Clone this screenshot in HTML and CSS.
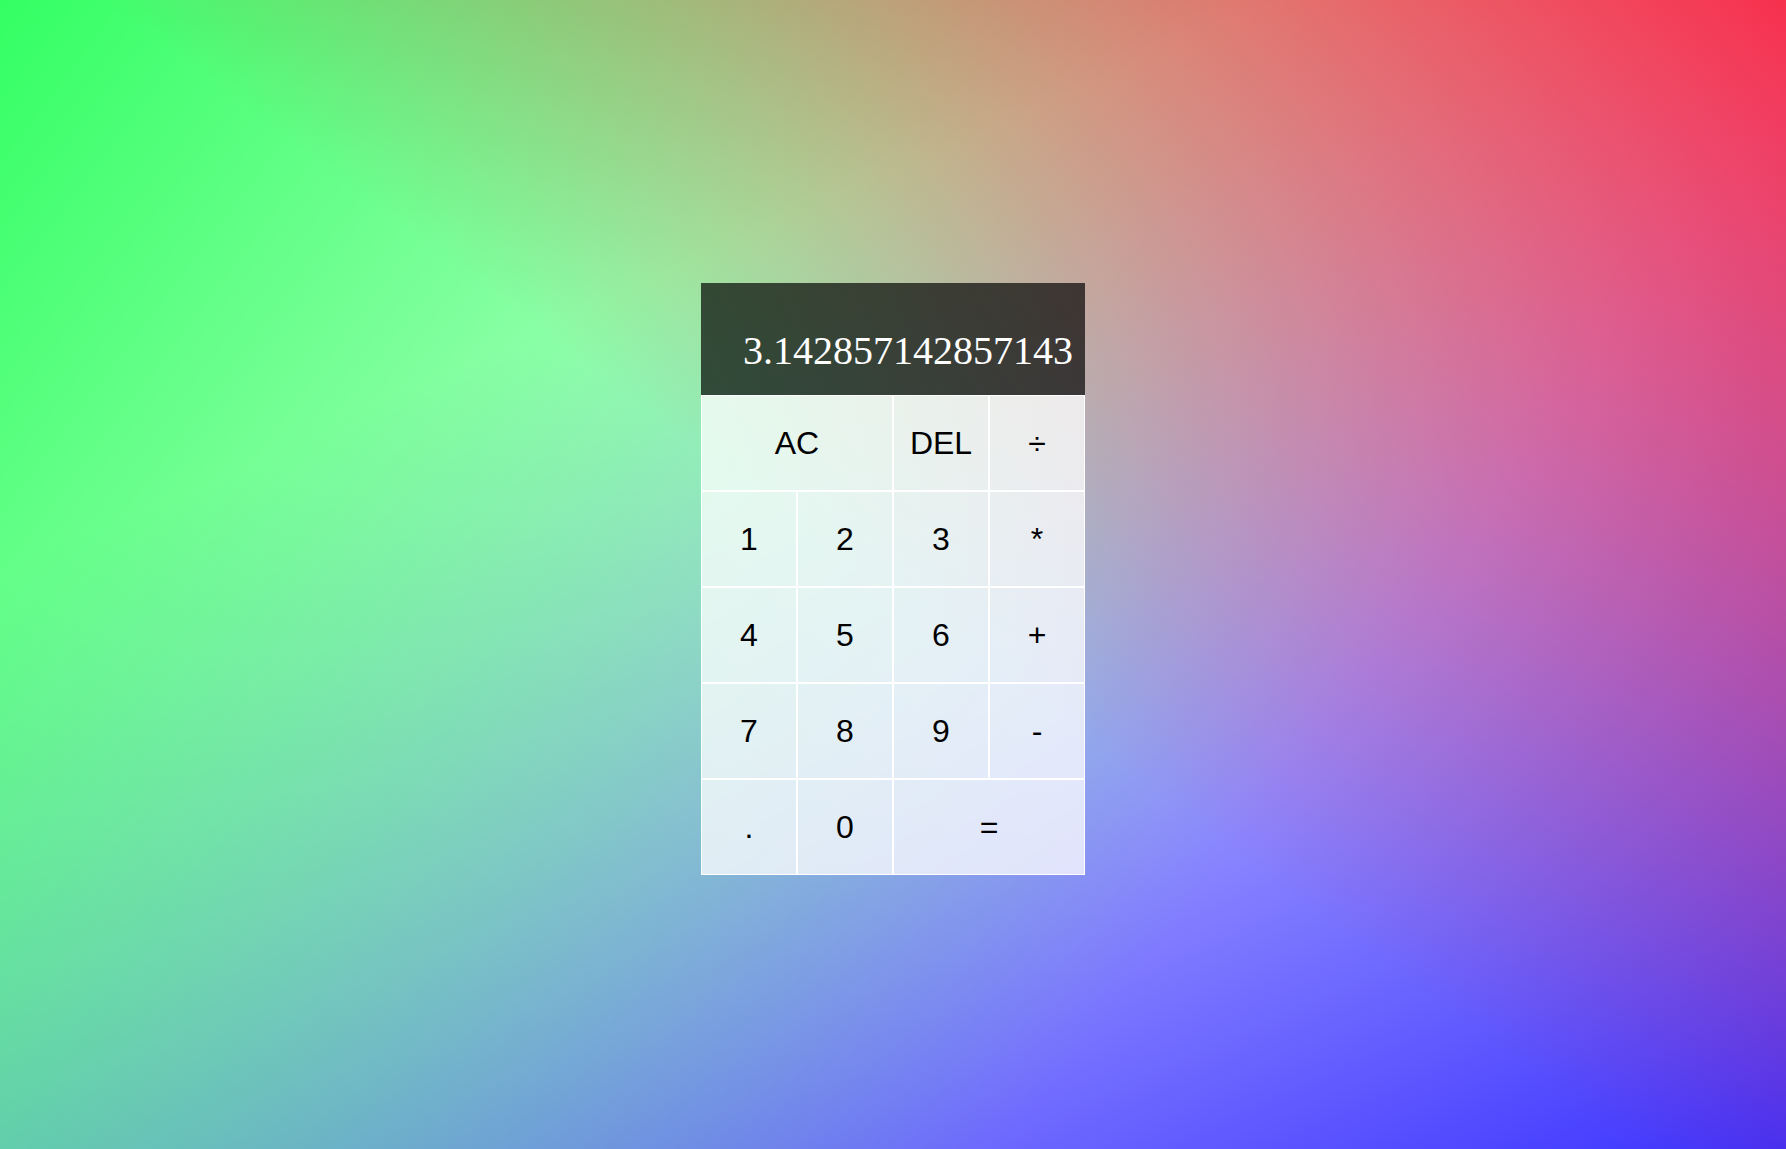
FILE: index.html
```html
<!DOCTYPE html>
<html lang="en">
<head>
<meta charset="utf-8">
<title>Calculator</title>
<link rel="stylesheet" href="styles.css">
</head>
<body>
<div class="page">
  <div class="calculator-grid">
    <div class="output">
      <div class="previous-operand"></div>
      <div class="current-operand">3.142857142857143</div>
    </div>
    <button class="span-two">AC</button>
    <button>DEL</button>
    <button>÷</button>
    <button>1</button>
    <button>2</button>
    <button>3</button>
    <button>*</button>
    <button>4</button>
    <button>5</button>
    <button>6</button>
    <button>+</button>
    <button>7</button>
    <button>8</button>
    <button>9</button>
    <button>-</button>
    <button>.</button>
    <button>0</button>
    <button class="span-two">=</button>
  </div>
</div>
</body>
</html>
```
FILE: styles.css
```css
*, *::before, *::after {
  box-sizing: border-box;
}

html {
  background: #fff;
}

body {
  margin: 0;
  padding: 0;
  min-height: 100vh;
  background:
    linear-gradient(217deg, rgba(255, 5, 35, 0.8), rgba(255, 5, 35, 0) 51%),
    linear-gradient(127deg, rgba(0, 255, 60, 0.8), rgba(0, 255, 60, 0) 70.71%),
    linear-gradient(336deg, rgba(10, 0, 255, 0.8), rgba(10, 0, 255, 0) 70.71%);
}

.page {
  height: 100vh;
  padding-top: 9px;
  display: flex;
  justify-content: center;
  align-items: center;
}

.calculator-grid {
  display: grid;
  grid-template-columns: repeat(4, 96px);
  grid-template-rows: 112px repeat(5, 96px);
}

.calculator-grid > button {
  cursor: pointer;
  font-family: "Liberation Sans", Arial, sans-serif;
  font-size: 32px;
  color: #000;
  border: 1px solid #fff;
  outline: none;
  padding: 0;
  margin: 0;
  background-color: rgba(255, 255, 255, 0.75);
}

.span-two {
  grid-column: span 2;
}

.output {
  grid-column: 1 / -1;
  background-color: rgba(0, 0, 0, 0.68);
  display: flex;
  flex-direction: column;
  align-items: flex-end;
  justify-content: space-around;
  padding: 10px 12px 10px 10px;
  word-wrap: break-word;
  word-break: break-all;
}

.previous-operand {
  color: rgba(255, 255, 255, 0.75);
  font-family: "Liberation Serif", "Times New Roman", serif;
  font-size: 24px;
}

.current-operand {
  color: #fff;
  font-family: "Liberation Serif", "Times New Roman", serif;
  font-size: 40px;
}
```
